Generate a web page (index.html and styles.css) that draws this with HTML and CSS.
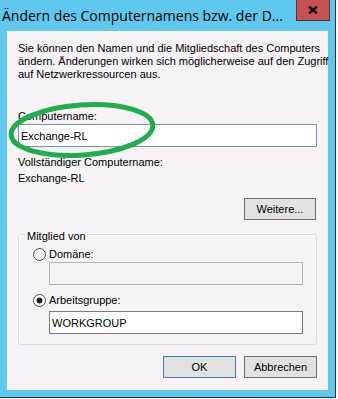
FILE: index.html
```
<!DOCTYPE html>
<html lang="de">
<head>
  <meta charset="UTF-8" />
  <title>Computername</title>
  <link rel="stylesheet" href="styles.css">
</head>
<body>
  <div class="window">
    <div class="titlebar">
      <span class="title">Ändern des Computernamens bzw. der D...</span>
      <button class="close" title="Schließen">
        <svg width="10" height="8" viewBox="0 0 10 8">
          <path d="M1 0.5 L9 7.5 M9 0.5 L1 7.5" stroke="#111" stroke-width="2.4" fill="none" />
        </svg>
      </button>
    </div>

    <div class="client">
      <p class="intro">Sie können den Namen und die Mitgliedschaft des Computers<br>ändern. Änderungen wirken sich möglicherweise auf den Zugriff<br>auf Netzwerkressourcen aus.</p>

      <label class="field-label" for="name">Computername:</label>
      <input id="name" class="textbox focus" value="Exchange-RL">

      <div class="field-label full-label">Vollständiger Computername:</div>
      <div class="full-name">Exchange-RL</div>

      <div class="more-row">
        <button class="btn more">Weitere...</button>
      </div>

      <fieldset class="group">
        <legend>Mitglied von</legend>
        <label class="radio-row first"><input type="radio" name="member"> Domäne:</label>
        <input class="textbox sub" disabled>
        <label class="radio-row second"><input type="radio" name="member" checked> Arbeitsgruppe:</label>
        <input class="textbox sub workgroup" value="WORKGROUP">
      </fieldset>

      <div class="actions">
        <button class="btn default">OK</button>
        <button class="btn">Abbrechen</button>
      </div>

      <!-- green marker drawn on top of the screenshot -->
      <svg class="marker" width="170" height="70" viewBox="0 0 170 70">
        <ellipse cx="75" cy="35" rx="71" ry="25" transform="rotate(-4 75 35)" fill="none" stroke="#1fae4b" stroke-width="5" />
      </svg>
    </div>
  </div>
</body>
</html>
```

FILE: styles.css
```
* {
  box-sizing: border-box;
}

body {
  margin: 0;
  background: #fff;
  font-family: "Liberation Sans", Arial, sans-serif;
  font-size: 11px;
  line-height: 13px;
  color: #000;
}

.window {
  width: 336px;
  height: 398px;
  background: #60c8ee;
  border-right: 1px solid #2c3a40;
  border-bottom: 1px solid #2c3a40;
  padding: 0 7px 7px 7px;
}

.titlebar {
  display: flex;
  align-items: flex-start;
  justify-content: space-between;
  height: 31px;
  margin-left: -5px;
}

.title {
  font-family: "Open Sans", sans-serif;
  font-size: 14px;
  line-height: 20px;
  padding-top: 6px;
  color: #000;
  white-space: nowrap;
}

.close {
  width: 34px;
  height: 21px;
  margin-right: -2px;
  padding: 0;
  background: #c75050;
  border: 1px solid #4a3434;
  border-top: none;
  display: flex;
  align-items: center;
  justify-content: center;
}

.client {
  position: relative;
  height: 359px;
  background: #f6f2f6;
  padding: 11px 11px 0 11px;
}

.intro {
  margin: 0;
  white-space: nowrap;
}

.field-label {
  display: block;
  margin-top: 29px;
}

.textbox {
  display: block;
  width: 299px;
  height: 23px;
  margin: 1px 0 0 0;
  padding: 0 2px;
  border: 1px solid #7a7a7a;
  background: #fff;
  font-family: "Liberation Sans", Arial, sans-serif;
  font-size: 11px;
  color: #000;
  outline: none;
}

.textbox.focus {
  border-color: #7d8ea5;
}

.full-label {
  margin-top: 9px;
}

.full-name {
  margin-top: 3px;
}

.more-row {
  display: flex;
  justify-content: flex-end;
  margin-top: 13px;
  padding-right: 1px;
}

.btn {
  width: 73px;
  height: 22px;
  padding: 0;
  background: #e1e1e1;
  border: 1px solid #707070;
  font-family: "Liberation Sans", Arial, sans-serif;
  font-size: 11px;
  color: #000;
}

.btn.more {
  width: 72px;
}

.btn.default {
  border-color: #3c7fb1;
}

.group {
  margin: 6px 0 0 0;
  padding: 0 6px 10px 6px;
  width: 299px;
  border: 1px solid #d9dde0;
  border-radius: 3px;
  box-shadow: inset 1px 1px 0 #fff;
  min-inline-size: 0;
}

.group legend {
  padding: 4px 2px 0 2px;
}

.radio-row {
  display: flex;
  align-items: center;
  gap: 3px;
  height: 13px;
  padding-left: 8px;
}

.radio-row.first {
  margin-top: 5px;
}

.radio-row.second {
  margin-top: 9px;
}

.radio-row input {
  appearance: none;
  width: 13px;
  height: 13px;
  margin: 0;
  border: 1px solid #4a4a4a;
  border-radius: 50%;
  background: #fff;
}

.radio-row input:checked {
  background: radial-gradient(circle, #1c1c1c 0 2.7px, #fff 3.3px);
}

.textbox.sub {
  width: 254px;
  margin-left: 24px;
}

.textbox.sub:disabled {
  background: #f6f2f6;
  border-color: #b4b4b4;
}

.textbox.workgroup {
  margin-top: 4px;
}

.actions {
  display: flex;
  justify-content: flex-end;
  gap: 8px;
  margin-top: 11px;
}

.marker {
  position: absolute;
  left: 0;
  top: 64px;
}
```
